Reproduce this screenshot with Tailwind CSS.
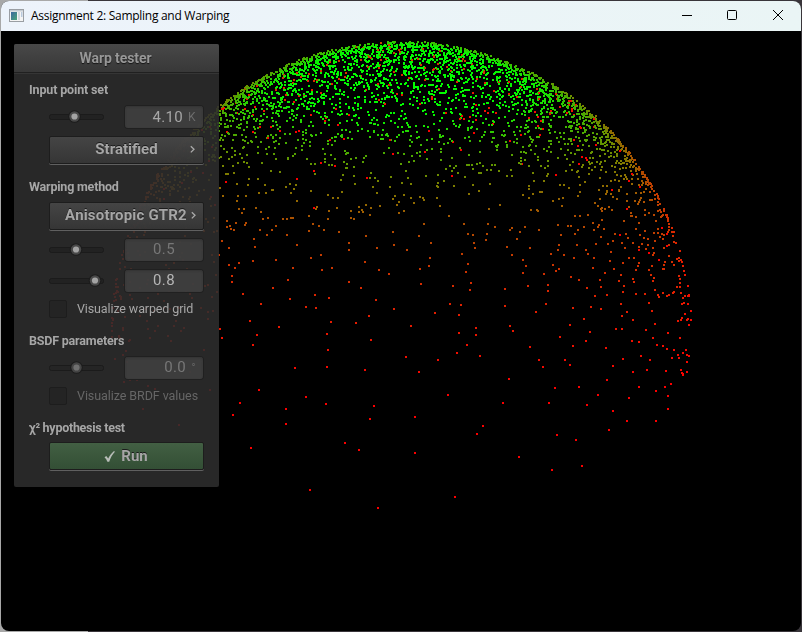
<!DOCTYPE html>
<html lang="en">
<head>
<meta charset="utf-8">
<title>Assignment 2: Sampling and Warping</title>
<script src="https://cdn.jsdelivr.net/npm/@tailwindcss/browser@4"></script>
</head>
<body class="w-[802px] h-[632px] overflow-hidden bg-linear-to-r from-[#a8a8a8] from-[88px] to-[#39353a] to-[88px] p-px">
<div class="w-[800px] h-[630px] rounded-lg overflow-hidden bg-black flex flex-col">
  <header class="h-[30px] shrink-0 bg-linear-to-r from-[#edf3fb] to-[#eaf5f5] flex items-center pl-2 text-black">
    <svg class="w-[15px] h-[13px] shrink-0 -mt-0.5" viewBox="0 0 15 13">
      <defs><linearGradient id="scr" x1="0" y1="0" x2="1" y2="1"><stop offset="0" stop-color="#3d68a0"/><stop offset="1" stop-color="#4ba578"/></linearGradient></defs>
      <rect x=".5" y=".5" width="14" height="12" fill="#f4f4f4" stroke="#9a9ea3"/>
      <rect x="1" y="1" width="13" height="1.5" fill="#c5cbd2"/>
      <rect x="2" y="3" width="6" height="8" fill="url(#scr)"/>
      <rect x="9" y="3" width="2" height="8" fill="#d5d9de"/><rect x="12" y="3" width="1.5" height="5" fill="#b9c9dd"/>
    </svg>
    <span class="ml-[7px] font-['Open_Sans','Noto_Sans',sans-serif] text-[12px] leading-4 tracking-[-0.28px] whitespace-nowrap">Assignment 2: Sampling and Warping</span>
    <div class="ml-auto -mr-px flex">
      <svg class="w-[46px] h-[30px]" viewBox="0 0 46 30"><path d="M18 14.5h10" stroke="#000" fill="none"/></svg>
      <svg class="w-[46px] h-[30px]" viewBox="0 0 46 30"><rect x="17.500" y="9.500" width="9" height="9" rx="1" stroke="#000" fill="none"/></svg>
      <svg class="w-[46px] h-[30px]" viewBox="0 0 46 30"><path d="M17 9l10 10M27 9l-10 10" stroke="#000" fill="none"/></svg>
    </div>
  </header>
  <main class="relative grow">
    <canvas id="view" width="800" height="600" class="block w-[800px] h-[600px]"></canvas>
    <section class="absolute left-[13px] top-[13px] w-[205px] h-[443px] rounded-[2px] overflow-hidden bg-[#2d2d2d]/88 font-[Roboto,sans-serif] text-[#a6a6a6]">
      <div class="h-[29px] bg-linear-to-b from-[#484848] to-[#383838] border-b border-[#202020] flex items-center justify-center font-bold text-[14px] tracking-[-.1px] text-[#979797] [text-shadow:0_1px_1px_#000a]"><span class="-ml-0.5">Warp tester</span></div>
      <div class="pl-[15px] pr-[15px] border-t border-[#424242]/50">
        <h2 class="mt-2 h-4 text-[12.5px] tracking-[-.14px] leading-4 font-bold">Input point set</h2>
        <div class="mt-2 ml-5 mr-px h-[22px] flex items-center justify-between">
          <svg class="w-[55px] h-[14px]" viewBox="0 0 55 14"><rect x=".5" y="4.500" width="54" height="5" rx="2" fill="#222" stroke="#1b1b1b"/><circle cx="25.500" cy="6.500" r="6.300" fill="#1c1c1c"/><circle cx="25.500" cy="6.500" r="5.200" fill="#484848"/><circle cx="25.500" cy="6.500" r="3.100" fill="#a3a3a3"/></svg>
          <div class="w-[78px] h-full rounded-[3px] bg-[#414141]/85 shadow-[0_0_0_1px_#202020,inset_0_1px_2px_#333] flex items-center justify-end pr-[7px] text-[15px] tracking-[.35px]"><span>4.10</span><span class="ml-[5px] text-[12px] text-[#6d6d6d]">K</span></div>
        </div>
        <div class="mt-2 ml-5 w-[155px] h-7 relative rounded-[2px] bg-linear-to-b from-[#484848]/90 to-[#373737]/90 border border-[#1d1d1d] shadow-[0_1px_0_#606060] flex items-center justify-center font-bold text-[15px] [text-shadow:0_-1px_0_#1b1b1b] pb-0.5"><span>Stratified</span>
          <svg class="absolute right-[8px] top-[8px] w-[5px] h-[9px]" viewBox="0 0 5 9"><path d="M.8 1.200L4 4.300.8 7.400" fill="none" stroke="#aaa" stroke-width="1.300"/></svg></div>
        <h2 class="mt-[15px] h-4 text-[12.5px] tracking-[-.2px] leading-4 font-bold">Warping method</h2>
        <div class="mt-[7px] ml-5 w-[155px] h-7 relative rounded-[2px] bg-linear-to-b from-[#484848]/90 to-[#373737]/90 border border-[#1d1d1d] shadow-[0_1px_0_#606060] flex items-center justify-center font-bold text-[15px] tracking-[.18px] [text-shadow:0_-1px_0_#1b1b1b] pb-0.5"><span class="whitespace-nowrap -ml-px">Anisotropic GTR2</span>
          <svg class="absolute right-[7px] top-[8px] w-[5px] h-[9px]" viewBox="0 0 5 9"><path d="M.8 1.200L4 4.300.8 7.400" fill="none" stroke="#aaa" stroke-width="1.300"/></svg></div>
        <div class="mt-[8px] ml-5 mr-px h-[23px] flex items-center justify-between">
          <svg class="w-[55px] h-[14px]" viewBox="0 0 55 14"><rect x=".5" y="4.500" width="54" height="5" rx="2" fill="#222" stroke="#1b1b1b"/><circle cx="27" cy="6.500" r="6.300" fill="#1c1c1c"/><circle cx="27" cy="6.500" r="5.200" fill="#484848"/><circle cx="27" cy="6.500" r="3.100" fill="#a3a3a3"/></svg>
          <div class="w-[78px] h-[22px] rounded-[3px] bg-[#414141]/85 shadow-[0_0_0_1px_#202020,inset_0_1px_2px_#333] flex items-center justify-center text-[15px] tracking-[.35px] text-[#777]">0.5</div>
        </div>
        <div class="mt-2 ml-5 mr-px h-[23px] flex items-center justify-between">
          <svg class="w-[55px] h-[14px]" viewBox="0 0 55 14"><rect x=".5" y="4.500" width="54" height="5" rx="2" fill="#222" stroke="#1b1b1b"/><circle cx="46" cy="6.500" r="6.300" fill="#1c1c1c"/><circle cx="46" cy="6.500" r="5.200" fill="#484848"/><circle cx="46" cy="6.500" r="3.100" fill="#a3a3a3"/></svg>
          <div class="w-[78px] h-[22px] rounded-[3px] bg-[#414141]/85 shadow-[0_0_0_1px_#202020,inset_0_1px_2px_#333] flex items-center justify-center text-[15px] tracking-[.35px] text-[#b5b5b5]">0.8</div>
        </div>
        <div class="mt-[8px] ml-5 h-[18px] flex items-center text-[12.5px] tracking-[-.12px]"><i class="w-[18px] h-[18px] rounded-[2px] bg-[#242424] border border-[#1d1d1d]"></i><span class="ml-[10px] whitespace-nowrap">Visualize warped grid</span></div>
        <h2 class="mt-[15px] h-4 text-[12.5px] tracking-[-.2px] leading-4 font-bold">BSDF parameters</h2>
        <div class="mt-[7px] ml-5 mr-px h-[23px] flex items-center justify-between">
          <svg class="w-[55px] h-[14px]" viewBox="0 0 55 14"><rect x=".5" y="4.500" width="54" height="5" rx="2" fill="#252525" stroke="#1b1b1b"/><circle cx="27.500" cy="6.500" r="6.300" fill="#1c1c1c"/><circle cx="27.500" cy="6.500" r="5.200" fill="#444"/><circle cx="27.500" cy="6.500" r="3.100" fill="#707070"/></svg>
          <div class="w-[78px] h-[22px] rounded-[3px] bg-[#414141]/85 shadow-[0_0_0_1px_#202020,inset_0_1px_2px_#333] flex items-center justify-end pr-[7px] text-[15px] tracking-[.35px] text-[#777]"><span>0.0</span><span class="ml-[5px] text-[12px] text-[#606060]">°</span></div>
        </div>
        <div class="mt-[8px] ml-5 h-[18px] flex items-center text-[12.5px] tracking-[-.07px] text-[#666]"><i class="w-[18px] h-[18px] rounded-[2px] bg-[#242424] border border-[#1d1d1d]"></i><span class="ml-[10px] whitespace-nowrap">Visualize BRDF values</span></div>
        <h2 class="mt-[15px] h-4 text-[12.5px] tracking-[-.27px] leading-4 font-bold">χ² hypothesis test</h2>
        <div class="mt-[6px] ml-5 w-[155px] h-7 rounded-[2px] bg-linear-to-b from-[#425f43] to-[#334f35] border border-[#1d1d1d] shadow-[0_1px_0_#606060] flex items-center justify-center gap-[6px] font-bold text-[15px] [text-shadow:0_-1px_0_#1b1b1b] pr-px">
          <svg class="w-[11px] h-[11px]" viewBox="0 0 11 11"><path d="M.5 6.300L2.300 5 4.200 7.500C5.500 4.800 7.500 2 10 0L10.900.8C8.300 3.500 6.500 6.800 5.200 10.800H3.400C2.800 9 1.800 7.500.5 6.300Z" fill="#b8bdb8"/></svg><span>Run</span></div>
      </div>
    </section>
  </main>
</div>
<script>
const ctx = document.getElementById('view').getContext('2d');
const CX = 399.5, CY = 299.5, R = 290;
let seed = 90210;
function rnd() { seed = (seed + 0x6D2B79F5) | 0; let t = Math.imul(seed ^ (seed >>> 15), 1 | seed); t = (t + Math.imul(t ^ (t >>> 7), 61 | t)) ^ t; return ((t ^ (t >>> 14)) >>> 0) / 4294967296; }
function lerp(table, v) {
  for (let i = 1; i < table.length; i++) if (v <= table[i][0]) {
    const a = table[i - 1], b = table[i], f = Math.max(0, (v - a[0]) / (b[0] - a[0]));
    return a.slice(1).map((q, k) => q + (b[k + 1] - q) * f);
  }
  return table[table.length - 1].slice(1);
}
const ramp = [[0,0,255],[38,5,245],[52,35,215],[68,65,180],[85,92,155],[105,122,128],[130,155,98],[145,175,78],[185,200,55],[215,220,38],[265,240,18],[315,252,0]];
const density = [[0,.032],[35,.034],[60,.030],[85,.022],[110,.0150],[140,.0092],[170,.0060],[200,.0046],[240,.0035],[290,.0020],[350,.0009],[420,.0002],[480,0]];
function dot(x, y, red) {
  const dx = (x - 405) / 3.3, dy = (y - 48) * (y < 48 ? .5 : 1);
  const rho = Math.hypot(x - CX, y - CY) / R;
  const limb = y < 300 ? 45 * Math.pow(rho, 60) : 0;
  const c = lerp(ramp, Math.hypot(dx, dy) + limb);
  ctx.fillStyle = red ? 'rgb(' + Math.round(190 + 60 * Math.min(1, y / 90)) + ',' + Math.round(Math.max(0, 75 - y * .75)) + ',0)' : 'rgb(' + Math.round(c[0]) + ',' + Math.round(c[1]) + ',0)';
  ctx.fillRect(Math.round(x), Math.round(y), 2, 2);
}
// Dense cap and limb of the sphere; the open lower area uses the sample lists below.
const CELL = 4;
for (let gy = 0; gy < 480; gy += CELL) for (let gx = 100; gx < 700; gx += CELL) for (let k = 0; k < 4; k++) {
  const x = gx + rnd() * CELL, y = gy + rnd() * CELL;
  const rho = Math.hypot(x - CX, y - CY) / R, u = rnd();
  if (rho >= 1) continue;
  if (y >= 199 && x > 218 && x < 656) continue;
  if (y > 345 && x > 656) continue;
  if (Math.hypot((x - CX) / R, (y - CY) / 185) > 1 && y > CY) continue;
  const J = Math.min(24, 1 / Math.sqrt(1 - rho * rho));
  let p = lerp(density, y)[0] * J * (1 + (y > 60 ? 1 : .3) * Math.pow(rho, 10));
  if (rho > .985 && y < 190) p *= 1.5;
  if (u < p * CELL * CELL / 4) dot(x, y, y < 200 && rnd() < (rho > .98 ? .02 : .08));
}
// Samples of the lower area, in thirds of a pixel from each tile's origin.
const tiles = [
 [209,199,"72,0 186,0 231,15 171,15 297,3 342,0 387,6 132,27 135,51 57,54 36,33 261,45 129,93 87,99 57,105 75,114 66,138 66,156 198,90 303,84 333,75 249,114 336,120 366,114 234,150 189,174 99,192 153,222 240,207 315,195 357,204 288,231 318,234 120,273 207,291 141,315 129,345 30,297 36,324 363,276 351,312 354,360 255,414 351,411 147,480 90,519 69,555 228,537 228,582 288,501 348,522 468,18 549,6 627,18 663,39 417,39 417,60 501,54 552,45 591,60 465,96 507,120 537,132 660,84 657,108 630,117 633,162 417,156 453,174 498,210 552,237 477,258 438,279 729,168 720,222 675,249 603,288 483,330 588,381 684,390 627,426 465,420 492,528 480,567 615,561 714,495"],
 [449,199,"54,12 69,15 111,12 108,30 72,39 75,54 36,72 54,102 48,126 63,159 60,180 9,168 0,222 33,225 27,255 27,309 78,294 78,315 51,345 21,369 90,378 210,6 201,27 171,51 186,75 240,54 219,90 228,108 219,129 234,168 165,177 165,228 282,132 294,165 294,183 288,222 258,246 180,288 189,303 240,351 267,390 279,411 177,447 159,519 99,588 297,519 315,474 345,390 360,405 369,348 330,321 360,285 402,267 369,234 423,231 420,306 408,333 333,15 375,12 384,0 327,45 324,60 303,72 342,75 372,84 381,45 309,105 318,123 327,117 363,141 387,150 411,174 408,60 414,72 432,84 438,42 453,21 474,42 489,33 495,12 528,12 534,24 483,66 480,93 429,114 465,129 492,117 450,150 453,171 435,198 471,195 453,237 516,39 525,54 549,39 570,15 585,3 582,24 594,27 576,42 567,51 588,57 594,45 612,9 624,9 636,12 615,33 609,54 612,69 609,75 537,84 552,84 519,99 567,99 564,108 558,120 606,108 597,120 603,135 612,144 609,153 513,135 507,153 522,168 519,186 549,147 552,156 558,192 585,192 615,180 513,222 531,246 516,258 549,270 606,243 597,219 498,297 516,297 588,300 615,282 546,333 567,336 609,324 468,354 519,387 573,378 600,390 489,408 549,426 591,420 471,450 387,471 411,525 444,495 489,543 537,504 567,471 531,573 618,483 618,573 654,498 654,537 645,471 663,462 648,423 693,420 699,432 711,426 711,396 717,378 687,384 666,384 699,369 672,360 651,357 639,348 621,345 510,15! 567,60! 597,69! 627,90! 651,12! 651,48!"],
 [209,389,"228,12 123,84 405,69 447,90 615,99 300,210 504,264 735,231 819,18 801,42 927,111 1041,45 1098,60 1026,150 1116,138 1197,30"]
];
for (const [ox, oy, list] of tiles) for (const s of list.split(' ')) {
  const [a, b] = s.replace('!', '').split(',').map(Number);
  const x = ox + Math.round((a - 3) / 3), y = oy + Math.round((b - 3) / 3);
  dot(x, y, s.endsWith('!'));
}
</script>
</body>
</html>
